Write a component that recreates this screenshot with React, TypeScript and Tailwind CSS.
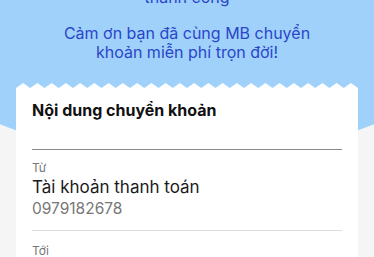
import React from "react";

function Zigzag() {
  const teeth = 24;
  const w = 342;
  const step = w / teeth;
  let d = `M0 6 `;
  for (let i = 0; i < teeth; i++) {
    const x0 = i * step;
    d += `L${(x0 + step / 2).toFixed(2)} 1 L${(x0 + step).toFixed(2)} 6 `;
  }
  d += `L${w} 7 L0 7 Z`;
  return (
    <svg width={w} height={7} viewBox={`0 0 ${w} 7`} className="block">
      <path d={d} fill="#ffffff" strokeLinejoin="round" />
    </svg>
  );
}

export default function App() {
  return (
    <main
      className="relative w-full h-[257px] overflow-hidden bg-[#f5f5f5]"
      style={{ fontFamily: "Inter, 'Noto Sans', sans-serif" }}
    >
      {/* blue header backdrop */}
      <div className="absolute left-[-113px] top-[-200px] w-[600px] h-[357px] bg-[#9fd1fa] rounded-b-[300px_150px]" />

      <div className="relative flex flex-col items-center">
        <p className="mt-[-12px] text-[16px] leading-[19px] text-[#2a46c9] text-center">
          thành công
        </p>
        <p className="mt-[17px] text-[16px] leading-[19px] text-[#2a46c9] text-center">
          Cảm ơn bạn đã cùng MB chuyển
          <br />
          khoản miễn phí trọn đời!
        </p>

        {/* card */}
        <div className="mt-[20px] w-[342px]">
          <Zigzag />
          <div className="bg-white px-4 pt-[9px]">
            <h2 className="text-[16px] leading-[24px] font-bold text-[#111]">
              Nội dung chuyển khoản
            </h2>
            <div className="mt-[27px] h-px bg-[#8a8a8a]" />
            <div className="pt-[11px] pb-[11px]">
              <div className="text-[12px] leading-[14px] text-[#777]">Từ</div>
              <div className="mt-[2px] text-[17px] leading-[21px] text-[#1a1a1a]">
                Tài khoản thanh toán
              </div>
              <div className="text-[15.5px] leading-[21px] text-[#777]">
                0979182678
              </div>
            </div>
            <div className="h-px bg-[#dcdcdc]" />
            <div className="pt-[13px] pb-4">
              <div className="text-[12px] leading-[14px] text-[#777]">Tới</div>
            </div>
          </div>
        </div>
      </div>
    </main>
  );
}
